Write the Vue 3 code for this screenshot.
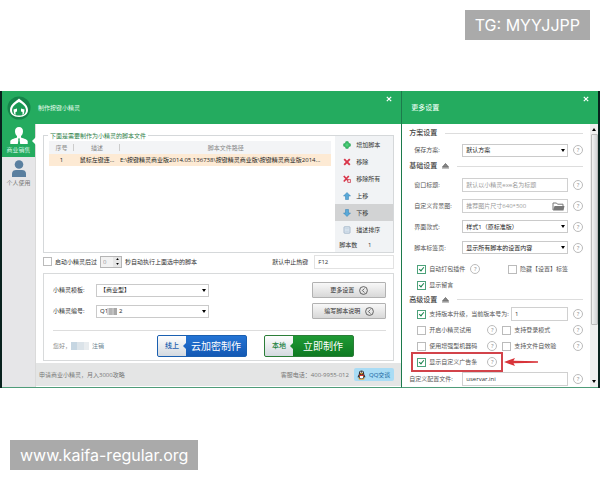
<script setup>
import { ref } from 'vue'

const tools = [
    { icon: 'add', label: '增加脚本' },
    { icon: 'remove', label: '移除' },
    { icon: 'removeAll', label: '移除所有' },
    { icon: 'up', label: '上移' },
    { icon: 'down', label: '下移', active: true },
    { icon: 'sort', label: '描述排序' }
]

const scripts = ref([
    { id: 1, name: '鼠标左键连...', path: 'E:\\按键精灵商业版2014.05.136738\\按键精灵商业版\\按键精灵商业版2014...' }
])

const fields = [
    { id: 'win-title', label: '窗口标题:', type: 'text', placeholder: '默认以小精灵exe名为标题' },
    { id: 'win-bg', label: '自定义背景图:', type: 'file', placeholder: '推荐图片尺寸640*500' },
    { id: 'win-style', label: '界面款式:', type: 'select', value: '样式1（原标准版）' },
    { id: 'win-tabs', label: '脚本标签页:', type: 'select', value: '显示所有脚本的设置内容' }
]

const autoRun = ref(false)
const delay = ref('0')
const hotkey = ref('F12')
const version = ref('1')
const configFile = ref('uservar.ini')

const options = ref({
    plugin: true,
    hideTab: false,
    message: true,
    upgrade: true,
    trial: false,
    login: false,
    machine: false,
    verify: false,
    adBar: true
})
</script>

<template>
    <div class="page">
        <div class="tag-row">
            <span class="tag">TG: MYYJJPP</span>
        </div>

        <main class="desktop">
            <section class="window main-window">
                <header class="titlebar">
                    <svg class="logo" viewBox="0 0 24 24">
                        <circle cx="12" cy="12" r="11.5" fill="#15854a" />
                        <path d="M12 2.500C9.500 5 3 8 3 14c0 4 3.500 7 9 7s9-3 9-7c0-6-6.500-9-9-11.500z" fill="#fff" />
                        <path d="M12 6c-3.500 2-7 4.500-7 8.500 0 3 2.500 5 7 5s7-2 7-5c0-4-3.500-6.500-7-8.500z" fill="#1a9a55" />
                        <path d="M6.500 13.500l3.500-1v3l-1.500.5v3L7 17.500zM17.500 13.500l-3.500-1v3l1.500.5v3l1.500-1.500z" fill="#fff" />
                    </svg>
                    <h1>制作按键小精灵</h1>
                    <button class="close" type="button" aria-label="关闭">
                        <svg viewBox="0 0 6 6"><path d="M.8.8l4.400 4.400M5.200.8L.8 5.200" stroke="#fff" stroke-width="1.200" /></svg>
                    </button>
                </header>

                <div class="main-body">
                    <nav class="sidebar">
                        <a class="nav-item active" href="#business">
                            <svg viewBox="0 0 18 17">
                                <path d="M9 0C6.400 0 5 1.700 5 4.200c0 2.300.9 3.800 2 4.800v1.500C4 11.800.8 12.300.3 14v3h17.400v-3c-.5-1.700-3.700-2.200-6.700-3.500V9c1.100-1 2-2.500 2-4.800C13 1.700 11.600 0 9 0z" fill="#fff" />
                                <path d="M8 11.500h2l-.4 1.500.6 4H7.800l.6-4z" fill="#24ab5f" />
                            </svg>
                            <span>商业销售</span>
                        </a>
                        <a class="nav-item" href="#personal">
                            <svg viewBox="0 0 18 17">
                                <circle cx="9" cy="4.500" r="4.300" fill="#5a7f9f" />
                                <path d="M2 17v-3.500C2 11 4 10 6 10h6c2 0 4 1 4 3.500V17z" fill="#5a7f9f" />
                            </svg>
                            <span>个人使用</span>
                        </a>
                    </nav>

                    <div class="content">
                        <div class="work">
                            <section class="script-box">
                                <h2>下面是需要制作为小精灵的脚本文件</h2>
                                <div class="table-wrap">
                                    <table>
                                        <thead>
                                            <tr>
                                                <th class="col-id">序号</th>
                                                <th class="col-name">描述</th>
                                                <th>脚本文件路径</th>
                                            </tr>
                                        </thead>
                                        <tbody>
                                            <tr v-for="item in scripts" :key="item.id">
                                                <td class="col-id">{{ item.id }}</td>
                                                <td class="col-name">{{ item.name }}</td>
                                                <td class="path">{{ item.path }}</td>
                                            </tr>
                                        </tbody>
                                    </table>
                                </div>
                                <div class="toolbar">
                                    <button v-for="tool in tools" :key="tool.icon" type="button"
                                        :class="{ active: tool.active }">
                                        <svg viewBox="0 0 8 8">
                                            <path v-if="tool.icon === 'add'" d="M2.800.8h2.400v2h2v2.400h-2v2H2.800v-2h-2V2.800h2z" fill="#4fd07a" stroke="#159a48" stroke-width=".8" />
                                            <path v-else-if="tool.icon === 'remove'" d="M1.200 1.200l5.600 5.600M6.800 1.200L1.200 6.800" stroke="#d9364a" stroke-width="1.900" />
                                            <g v-else-if="tool.icon === 'removeAll'">
                                                <path d="M.8 1l5 5.500M5.800 1L.8 6.500" stroke="#d9364a" stroke-width="1.700" />
                                                <path d="M4.800 4.500h2.700v3H4.800z" fill="#f6d9dc" stroke="#c9364a" stroke-width=".7" />
                                            </g>
                                            <path v-else-if="tool.icon === 'up'" d="M4 .5L7.500 4H5.500v3.500h-3V4h-2z" fill="#5aa9d8" stroke="#2f7fb5" stroke-width=".5" />
                                            <path v-else-if="tool.icon === 'down'" d="M4 7.500L.5 4h2V.5h3V4h2z" fill="#5aa9d8" stroke="#2f7fb5" stroke-width=".5" />
                                            <g v-else>
                                                <rect x="1" y=".8" width="6" height="6.400" rx=".6" fill="#dfe9f2" stroke="#8ca4bb" stroke-width=".7" />
                                                <path d="M2.200 2.500h3.600M2.200 4h3.600M2.200 5.500h3.600" stroke="#b3c6d8" stroke-width=".5" />
                                            </g>
                                        </svg>
                                        {{ tool.label }}
                                    </button>
                                    <p class="count">脚本数 <span>{{ scripts.length }}</span></p>
                                </div>
                            </section>

                            <div class="run-row">
                                <label class="check dark">
                                    <input v-model="autoRun" type="checkbox">
                                    <span>启动小精灵后过</span>
                                </label>
                                <span class="stepper">
                                    <input v-model="delay" type="text" aria-label="秒数">
                                    <span class="steps">
                                        <button type="button" aria-label="增加"><svg viewBox="0 0 4 3"><path d="M0 3l2-3 2 3z" /></svg></button>
                                        <button type="button" aria-label="减少"><svg viewBox="0 0 4 3"><path d="M0 0l2 3 2-3z" /></svg></button>
                                    </span>
                                </span>
                                <span>秒自动执行上面选中的脚本</span>
                                <label class="hotkey-label" for="hotkey">默认中止热键</label>
                                <input id="hotkey" v-model="hotkey" class="box hotkey" type="text">
                            </div>

                            <section class="template-box">
                                <div class="template-row">
                                    <label for="tpl">小精灵模板:</label>
                                    <span class="select">
                                        <select id="tpl"><option>【商业型】</option></select>
                                        <i><svg viewBox="0 0 4 3"><path d="M0 0h4L2 3z" /></svg></i>
                                    </span>
                                    <button class="gray-btn" type="button">
                                        更多设置
                                        <svg viewBox="0 0 9 9"><circle cx="4.500" cy="4.500" r="3.900" /><path d="M5.400 2.500l-2 2 2 2" /></svg>
                                    </button>
                                </div>
                                <div class="template-row">
                                    <label for="code">小精灵编号:</label>
                                    <span class="select">
                                        <select id="code"><option>Q1&nbsp;&nbsp;&nbsp;&nbsp;&nbsp;&nbsp;&nbsp;2</option></select>
                                        <b class="mosaic"></b>
                                        <i><svg viewBox="0 0 4 3"><path d="M0 0h4L2 3z" /></svg></i>
                                    </span>
                                    <button class="gray-btn" type="button">
                                        编写脚本说明
                                        <svg viewBox="0 0 9 9"><circle cx="4.500" cy="4.500" r="3.900" /><path d="M5.400 2.500l-2 2 2 2" /></svg>
                                    </button>
                                </div>
                                <div class="make-row">
                                    <p class="hello">您好，<b class="mask"></b><a href="#logout">注销</a></p>
                                    <button class="make blue" type="button"><span>线上</span><strong>云加密制作</strong></button>
                                    <button class="make green" type="button"><span>本地</span><strong>立即制作</strong></button>
                                </div>
                            </section>
                        </div>

                        <footer class="footer">
                            <a href="#guide">申请商业小精灵，月入3000攻略</a>
                            <span class="phone">客服电话：400-9955-012</span>
                            <button class="qq" type="button">
                                <svg viewBox="0 0 9 10">
                                    <ellipse cx="4.500" cy="8.800" rx="3.200" ry="1" fill="#f0a020" />
                                    <path d="M4.500.5C2.700.5 1.900 1.800 1.900 3.300v1C1 5.500.6 6.800.8 7.500c.3.300.8-.2 1.100-.6.300 1.300 1.300 2.100 2.600 2.100s2.300-.8 2.600-2.100c.3.400.8.900 1.100.6.200-.7-.2-2-1.100-3.200v-1C7.100 1.800 6.300.5 4.500.5z" fill="#333" />
                                    <ellipse cx="4.500" cy="6.700" rx="1.800" ry="1.900" fill="#fff" />
                                    <path d="M2 4.300c1.500.8 3.500.8 5 0v1.200c-1.500.7-3.500.7-5 0z" fill="#e03a2c" />
                                    <ellipse cx="3.700" cy="2.300" rx=".6" ry=".8" fill="#fff" />
                                    <ellipse cx="5.300" cy="2.300" rx=".6" ry=".8" fill="#fff" />
                                    <ellipse cx="4.500" cy="3.600" rx="1.400" ry=".5" fill="#f5a623" />
                                </svg>
                                QQ交谈
                            </button>
                        </footer>
                    </div>
                </div>
            </section>

            <section class="window side-window">
                <header class="titlebar">
                    <h1>更多设置</h1>
                    <button class="close" type="button" aria-label="关闭">
                        <svg viewBox="0 0 6 6"><path d="M.8.8l4.400 4.400M5.200.8L.8 5.200" stroke="#fff" stroke-width="1.200" /></svg>
                    </button>
                </header>
                <div class="side-body">
                    <form class="settings" @submit.prevent>
                        <h3 class="first">方案设置</h3>
                        <div class="field short">
                            <label for="plan">保存方案:</label>
                            <span class="select">
                                <select id="plan"><option>默认方案</option></select>
                                <i><svg viewBox="0 0 4 3"><path d="M0 0h4L2 3z" /></svg></i>
                            </span>
                            <button class="help" type="button">?</button>
                        </div>

                        <h3>基础设置 <svg viewBox="0 0 7 6"><path d="M.5 4L3.500.5l3 3.500zM0 5h7" /></svg></h3>
                        <div v-for="field in fields" :key="field.id" class="field">
                            <label :for="field.id">{{ field.label }}</label>
                            <span v-if="field.type === 'select'" class="select">
                                <select :id="field.id"><option>{{ field.value }}</option></select>
                                <i><svg viewBox="0 0 4 3"><path d="M0 0h4L2 3z" /></svg></i>
                            </span>
                            <span v-else class="select">
                                <input :id="field.id" class="box" type="text" :placeholder="field.placeholder">
                                <svg v-if="field.type === 'file'" class="folder" viewBox="0 0 13 9">
                                    <path d="M1 8V1h3.500l1 1.200H11V4" fill="none" stroke="#777" />
                                    <path d="M2.500 4H12.500L11.500 8.500H1z" fill="#777" />
                                </svg>
                            </span>
                            <button class="help" type="button">?</button>
                        </div>

                        <div class="options">
                            <div class="option-row wide">
                                <label class="check"><input v-model="options.plugin" type="checkbox"><span>自动打包插件</span></label>
                                <button class="help" type="button">?</button>
                                <label class="check right"><input v-model="options.hideTab" type="checkbox"><span>隐藏【设置】标签</span></label>
                            </div>
                            <div class="option-row">
                                <label class="check"><input v-model="options.message" type="checkbox"><span>显示留言</span></label>
                            </div>
                        </div>

                        <h3 class="tight">高级设置 <svg viewBox="0 0 7 6"><path d="M.5 4L3.500.5l3 3.500zM0 5h7" /></svg></h3>
                        <div class="options">
                            <div class="option-row">
                                <label class="check"><input v-model="options.upgrade" type="checkbox"><span>支持版本升级，当前版本号为:</span></label>
                                <input v-model="version" class="box version" type="text" aria-label="当前版本号">
                                <button class="help" type="button">?</button>
                            </div>
                            <div class="option-row pair">
                                <label class="check"><input v-model="options.trial" type="checkbox"><span>开启小精灵试用</span></label>
                                <button class="help" type="button">?</button>
                                <label class="check"><input v-model="options.login" type="checkbox"><span>支持登录模式</span></label>
                                <button class="help" type="button">?</button>
                            </div>
                            <div class="option-row pair">
                                <label class="check"><input v-model="options.machine" type="checkbox"><span>使用增强型机器码</span></label>
                                <button class="help" type="button">?</button>
                                <label class="check"><input v-model="options.verify" type="checkbox"><span>支持文件自效验</span></label>
                                <button class="help" type="button">?</button>
                            </div>
                            <div class="option-row pair">
                                <label class="check"><input v-model="options.adBar" type="checkbox"><span>显示自定义广告条</span></label>
                                <button class="help" type="button">?</button>
                                <span class="highlight"></span>
                                <svg class="arrow" viewBox="0 0 34 8"><path d="M0 4L11 0 9.500 2.800 34 3.300v1.400L9.500 5.200 11 8z" fill="#d8343a" /></svg>
                            </div>
                        </div>
                        <div class="field last">
                            <label for="conf">自定义配置文件:</label>
                            <input id="conf" v-model="configFile" class="box" type="text">
                            <button class="help" type="button">?</button>
                        </div>
                    </form>
                    <div class="scrollbar">
                        <svg viewBox="0 0 4 3"><path d="M0 3l2-3 2 3z" /></svg>
                        <span class="thumb"></span>
                        <svg viewBox="0 0 4 3"><path d="M0 0h4L2 3z" /></svg>
                    </div>
                </div>
            </section>
        </main>

        <div class="site-row">
            <span class="tag">www.kaifa-regular.org</span>
        </div>
    </div>
</template>

<style>
body {
    margin: 0;
    background: #fff;
}
</style>

<style scoped>
* {
    box-sizing: border-box;
}

.page {
    color: #333;
    font: 6px/8px "Open Sans", "Noto Sans CJK SC", sans-serif;
}

h1, h2, h3, p {
    margin: 0;
    font-weight: 400;
}

button, input, select {
    margin: 0;
    padding: 0;
    border: 0;
    border-radius: 0;
    background: none;
    color: inherit;
    font: inherit;
    min-width: 0;
    outline: none;
}

a {
    color: inherit;
    text-decoration: none;
}

svg {
    display: block;
    flex: none;
}

.tag-row,
.site-row {
    display: flex;
    padding: 10px;
}

.tag-row {
    justify-content: flex-end;
    padding-bottom: 51px;
}

.site-row {
    padding-top: 52px;
}

.tag {
    padding: 0 10px;
    background: #aaa;
    color: #fff;
    font: 16px/30px Inter, sans-serif;
}

.desktop {
    display: flex;
    padding: 0 2px;
    background: #08211d;
}

.window {
    display: flex;
    flex-direction: column;
    min-width: 0;
    background: #fff;
    border-bottom: 1px solid #4e9c79;
}

.main-window {
    flex: 100 1 0;
}

.side-window {
    flex: 49 1 0;
    border-left: 1px solid #1c7a4c;
}

.titlebar {
    position: relative;
    display: flex;
    align-items: center;
    gap: 7px;
    height: 33px;
    padding-left: 5px;
    background: #24ab5f;
    color: #e4fbee;
}

.side-window .titlebar {
    padding-left: 9px;
}

.titlebar h1 {
    font-size: 6px;
}

.side-window .titlebar h1 {
    font-size: 7px;
    font-weight: 500;
}

.logo {
    width: 24px;
    height: 24px;
}

.close {
    position: absolute;
    top: 5px;
    right: 9px;
}

.close svg {
    width: 6px;
    height: 6px;
}

.main-body {
    display: flex;
    flex: 1;
}

.sidebar {
    width: 34px;
    background: #e6e6e8;
    border-right: 1px solid #dadada;
}

.nav-item {
    position: relative;
    display: flex;
    flex-direction: column;
    align-items: center;
    gap: 2px;
    height: 33px;
    padding-top: 3px;
    color: #777;
}

.nav-item svg {
    width: 18px;
    height: 17px;
}

.nav-item.active {
    background: #24ab5f;
    color: #d8f5e4;
}

.nav-item.active::after {
    content: "";
    position: absolute;
    right: -1px;
    top: 13px;
    border: 4px solid transparent;
    border-left: 0;
    border-right-color: #fff;
}

.content {
    flex: 1;
    min-width: 0;
}

.work {
    padding: 11px 7px 2px;
}

.script-box {
    position: relative;
    display: flex;
    border: 1px solid #d5d8da;
}

.script-box h2 {
    position: absolute;
    left: 4px;
    top: -4px;
    padding: 0 2px;
    background: #fff;
    color: #2f7f4a;
    font-size: 6px;
}

.table-wrap {
    flex: 1;
    min-width: 0;
    padding: 5px 4px 0 5px;
}

table {
    width: 100%;
    table-layout: fixed;
    border-collapse: collapse;
}

th {
    height: 13px;
    padding: 0;
    background: #f3f4f6;
    color: #888;
    font-weight: 400;
}

td {
    height: 12px;
    padding: 0;
    background: #fdead4;
    color: #222;
    white-space: nowrap;
}

th.col-id,
th.col-name {
    background: linear-gradient(#ccc, #ccc) right center / 1px 7px no-repeat #f3f4f6;
}

.col-id {
    width: 25px;
    text-align: center;
}

.col-name {
    width: 46px;
    text-align: center;
}

.path {
    overflow: hidden;
}

.toolbar {
    width: 58px;
    background: #f1f3f5;
}

.toolbar button {
    display: flex;
    align-items: center;
    gap: 5px;
    width: 100%;
    height: 17px;
    padding-left: 8px;
    color: #333;
}

.toolbar button.active {
    background: #d2d3d4;
}

.toolbar svg {
    width: 8px;
    height: 8px;
}

.count {
    padding: 3px 0 3px 4px;
}

.count span {
    margin-left: 9px;
}

.run-row {
    display: flex;
    align-items: center;
    gap: 3px;
    height: 20px;
    padding-bottom: 3px;
}

.check {
    display: flex;
    align-items: center;
    gap: 3px;
    color: #555;
    white-space: nowrap;
}

.check.dark {
    color: #333;
}

.check input {
    appearance: none;
    flex: none;
    width: 9px;
    height: 9px;
    border: 1px solid #bbb;
    background: #fff;
}

.check input:checked {
    border-color: #4da27a;
    position: relative;
}

.check input:checked::after {
    content: "";
    position: absolute;
    left: 2px;
    top: 0;
    width: 2px;
    height: 4px;
    border: solid #16824a;
    border-width: 0 1px 1px 0;
    transform: rotate(40deg);
}

.stepper {
    display: flex;
    width: 22px;
    height: 12px;
    border: 1px solid #b5b5b5;
    background: #f2f2f2;
}

.stepper input {
    flex: 1;
    width: 0;
    padding-left: 2px;
    color: #999;
}

.steps {
    display: flex;
    flex-direction: column;
    justify-content: space-around;
    width: 8px;
    background: #e6e6e6;
}

.steps svg {
    width: 3px;
    height: 2px;
    margin: 0 auto;
}

.hotkey-label {
    margin-left: auto;
    margin-right: 3px;
}

.box {
    height: 14px;
    padding: 0 3px;
    border: 1px solid #d0d0d0;
    background: #fff;
    color: #333;
}

.box::placeholder {
    color: #999;
    opacity: 1;
}

.hotkey {
    width: 80px;
    border-color: #e2e2e2;
}

.template-box {
    padding: 8px 7px 0 9px;
    border: 1px solid #d8dadb;
}

.template-row {
    display: flex;
    align-items: center;
    height: 16px;
    margin-bottom: 5px;
}

.template-row label {
    width: 43px;
}

.template-row .select {
    width: 113px;
    flex: none;
}

.select {
    position: relative;
    display: flex;
    flex: 1;
    min-width: 0;
}

.select select,
.select .box {
    width: 100%;
}

select {
    appearance: none;
    height: 13px;
    padding: 0 3px;
    border: 1px solid #cacaca;
    background: #fff;
    color: #222;
}

.select i {
    position: absolute;
    top: 5px;
    right: 3px;
    pointer-events: none;
}

.select i svg {
    width: 4px;
    height: 3px;
}

.mosaic {
    position: absolute;
    left: 11px;
    top: 3px;
    width: 10px;
    height: 7px;
    background: linear-gradient(90deg, #d5d5d5 25%, #b5b5b5 25% 50%, #c2c2c2 50% 75%, #a8a8a8 75%);
}

.gray-btn {
    display: flex;
    align-items: center;
    justify-content: center;
    gap: 5px;
    width: 74px;
    height: 16px;
    margin-left: auto;
    border: 1px solid #b2b2b2;
    border-radius: 1px;
    background: linear-gradient(#f8f8f8, #d8d8d8);
}

.gray-btn svg {
    width: 9px;
    height: 9px;
    fill: none;
    stroke: #444;
    stroke-width: .8;
}

.make-row {
    display: flex;
    align-items: center;
    height: 30px;
    margin-top: 11px;
    border-top: 1px solid #ddd;
}

.hello {
    display: flex;
    align-items: center;
    width: 104px;
    color: #888;
}

.mask {
    width: 18px;
    height: 8px;
    margin-right: 3px;
    background: linear-gradient(90deg, #c6d6e2 35%, #dbe3e9 35% 70%, #e8ecef 70%);
}

.hello a {
    color: #6a7f90;
}

.make {
    display: flex;
    width: 90px;
    height: 22px;
    margin-right: 17px;
    border-radius: 2px;
    overflow: hidden;
    line-height: 20px;
}

.make span {
    position: relative;
    width: 28px;
    background: linear-gradient(#fdfdfd, #d4dae0);
    font-size: 7px;
    font-weight: 500;
}

.make span::after {
    content: "";
    position: absolute;
    right: 0;
    top: 7px;
    border: 3px solid transparent;
    border-left: 0;
}

.make strong {
    flex: 1;
    color: #fff;
    font-size: 10px;
    font-weight: 400;
}

.blue {
    border: 1px solid #1a5fb0;
    background: linear-gradient(#2474d4, #1459b4);
}

.blue span {
    color: #1d5fae;
}

.blue span::after {
    border-right-color: #1c66c4;
}

.green {
    border: 1px solid #2b7d38;
    background: linear-gradient(#1f9a35, #0f7a22);
}

.green span {
    color: #17803a;
}

.green span::after {
    border-right-color: #178a2c;
}

.footer {
    display: flex;
    align-items: center;
    height: 23px;
    padding: 0 7px 0 3px;
    background: #e4e5e5;
    color: #777;
}

.phone {
    margin-left: auto;
    margin-right: 5px;
}

.qq {
    display: flex;
    align-items: center;
    gap: 3px;
    height: 13px;
    padding: 0 4px 0 3px;
    border-radius: 2px;
    background: #a9dcf5;
    color: #125f9c;
}

.qq svg {
    width: 9px;
    height: 10px;
}

.side-body {
    display: flex;
    flex: 1;
}

.settings {
    flex: 1;
    min-width: 0;
    padding: 0 7px;
}

h3 {
    display: flex;
    align-items: center;
    gap: 5px;
    height: 16px;
    font-size: 7px;
    font-weight: 500;
    color: #444;
}

h3::after {
    content: "";
    flex: 1;
    margin-left: 3px;
    border-top: 1px solid #ddd;
}

h3.first {
    height: 18px;
}

h3.tight {
    height: 13px;
}

h3 svg {
    width: 7px;
    height: 6px;
    fill: #888;
    stroke: #666;
    stroke-width: .8;
}

.field {
    display: flex;
    align-items: center;
    height: 21px;
    color: #555;
}

.field.short {
    height: 16px;
}

.field.last {
    height: 17px;
}

.field label {
    width: 53px;
    padding-left: 5px;
}

.field.last label {
    padding-left: 0;
}

.field.last .box {
    flex: 1;
}

.folder {
    position: absolute;
    right: 3px;
    top: 3px;
    width: 13px;
    height: 9px;
}

.help {
    flex: none;
    width: 10px;
    height: 10px;
    margin-left: 5px;
    border: 1px solid #bbb;
    border-radius: 50%;
    color: #888;
    line-height: 8px;
    text-align: center;
}

.options {
    padding-left: 8px;
}

.option-row {
    position: relative;
    display: flex;
    align-items: center;
    height: 16px;
}

.option-row.wide {
    height: 19px;
    padding-top: 3px;
}

.option-row .right {
    margin-left: auto;
    margin-right: 15px;
}

.option-row .version {
    flex: 1;
    margin-left: 2px;
}

.pair {
    display: grid;
    grid-template-columns: 65px 20px 1fr auto;
}

.highlight {
    position: absolute;
    left: -6px;
    top: -2px;
    width: 92px;
    height: 20px;
    border: 2px solid #d2434a;
    pointer-events: none;
}

.arrow {
    position: absolute;
    left: 87px;
    top: 4px;
    width: 34px;
    height: 8px;
}

.scrollbar {
    display: flex;
    flex-direction: column;
    align-items: center;
    gap: 3px;
    width: 8px;
    padding: 4px 0;
    background: #efefef;
}

.scrollbar svg {
    width: 4px;
    height: 3px;
}

.thumb {
    width: 7px;
    height: 75%;
    margin-bottom: auto;
    border: 1px solid #bbb;
    border-radius: 1px;
    background: linear-gradient(90deg, #f2f2f2, #d2d4d6);
}
</style>
